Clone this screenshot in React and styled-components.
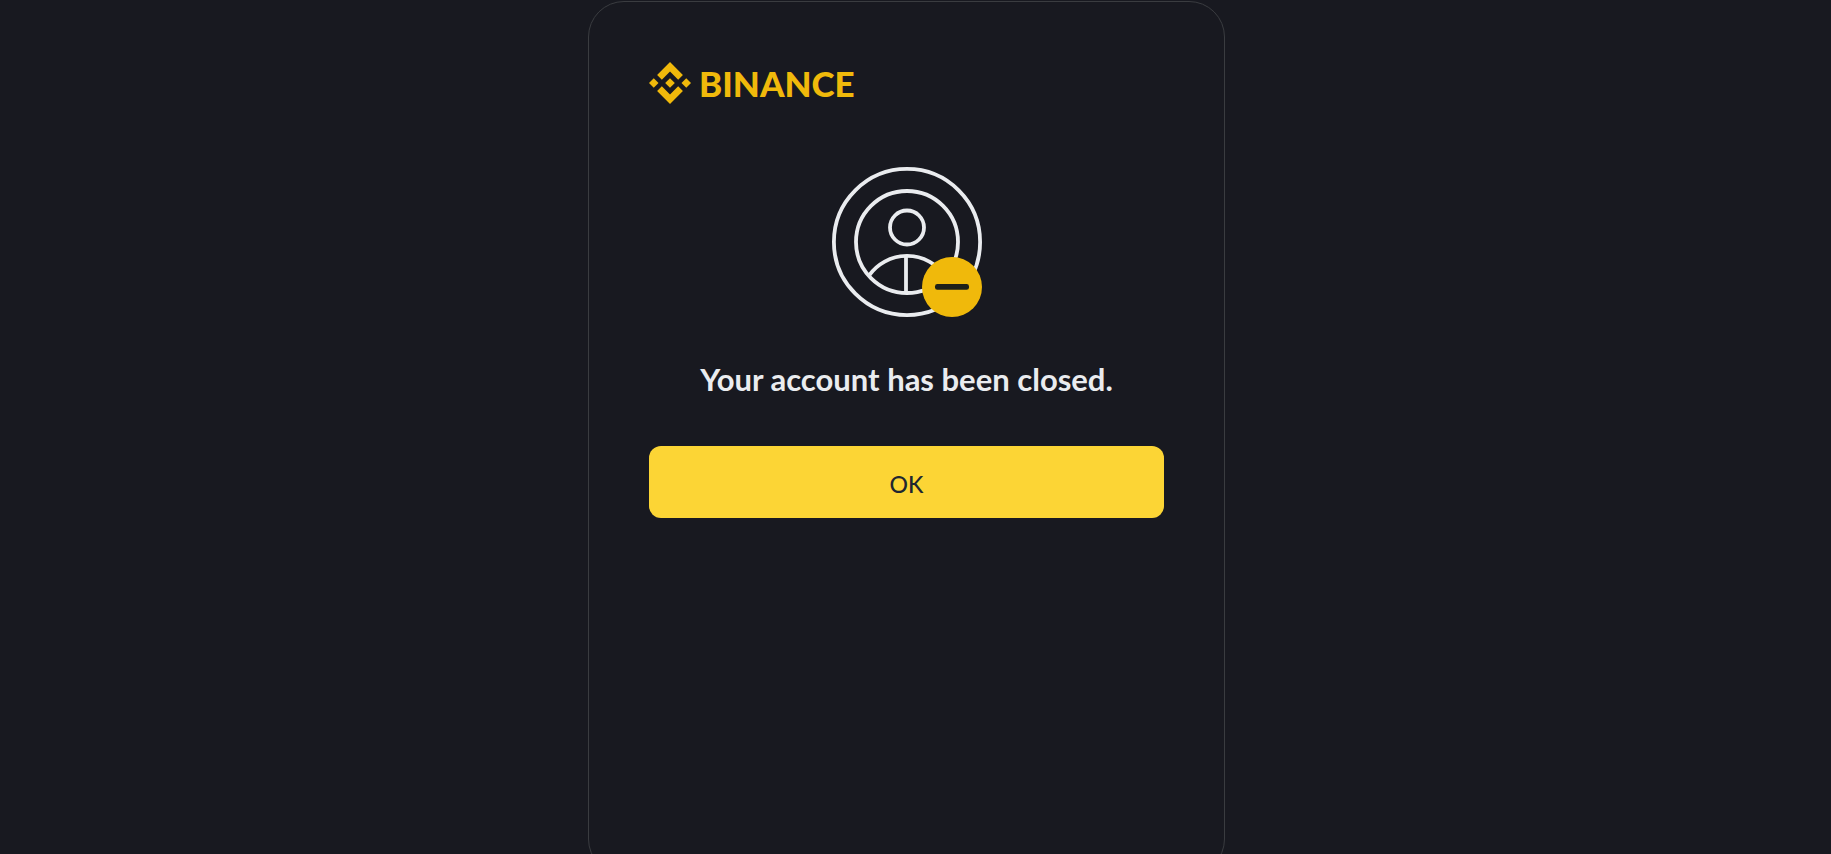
import React from 'react'
import styled, { createGlobalStyle } from 'styled-components'

const GlobalStyle = createGlobalStyle`
  * {
    box-sizing: border-box;
  }
  body {
    margin: 0;
    background: #181920;
    font-family: Lato, "Liberation Sans", sans-serif;
  }
`

const Page = styled.main`
  display: flex;
  justify-content: center;
  align-items: flex-start;
  height: 100vh;
  overflow: hidden;
  padding: 1px 18px 0 0;
`

const Card = styled.section`
  display: flex;
  flex-direction: column;
  flex-shrink: 0;
  width: 100%;
  max-width: 637px;
  min-height: calc(100vh + 20px);
  padding: 60px;
  border: 1px solid #3a3c40;
  border-radius: 36px;
`

const Brand = styled.a`
  display: flex;
  align-items: center;
  align-self: flex-start;
  gap: 8px;
  height: 42px;
  color: #f0b90b;
  text-decoration: none;
`

const BrandMark = styled.svg`
  width: 42px;
  height: 42px;
  fill: currentColor;
`

const BrandName = styled.span`
  font-size: 35px;
  font-weight: 900;
  line-height: 40px;
`

const Illustration = styled.svg`
  align-self: center;
  width: 150px;
  height: 150px;
  margin-top: 63px;
`

const Title = styled.h1`
  margin: 40px 0 45px;
  color: #eaecef;
  font-size: 31px;
  font-weight: 700;
  line-height: 44px;
  text-align: center;
`

const ConfirmButton = styled.button`
  height: 72px;
  padding: 4px 0 0;
  border: none;
  border-radius: 12px;
  background: #fcd535;
  color: #202630;
  font-family: inherit;
  font-size: 23px;
  font-weight: 500;
  cursor: pointer;

  &:hover {
    opacity: 0.9;
  }
`

function Logo() {
  return (
    <Brand href="#">
      <BrandMark viewBox="0 0 126.61 126.61" aria-hidden="true">
        <path d="M38.73 53.2 63.32 28.62 87.92 53.22 102.22 38.91 63.32 0 24.42 38.9z" />
        <path d="M0 63.31 14.3 49 28.61 63.31 14.3 77.61z" />
        <path d="M38.73 73.41 63.32 98 87.92 73.4 102.23 87.69 63.33 126.6 24.42 87.72z" />
        <path d="M98 63.31 112.3 49 126.61 63.3 112.3 77.62z" />
        <path d="M77.83 63.3 63.32 48.78 48.81 63.28 63.32 77.78z" />
      </BrandMark>
      <BrandName>BINANCE</BrandName>
    </Brand>
  )
}

function AccountClosedIcon() {
  return (
    <Illustration viewBox="0 0 150 150" fill="none" aria-hidden="true">
      <g stroke="#eaecef" strokeWidth="3.8">
        <circle cx="75" cy="75" r="73.1" />
        <circle cx="75" cy="75" r="51" />
        <circle cx="75" cy="60.5" r="17" />
        <path d="M37.3 108.2A46.5 46.5 0 0 1 112.7 108.2" />
        <path d="M74 89V126" />
      </g>
      {/* minus badge */}
      <circle cx="120" cy="120" r="30" fill="#f0b90b" />
      <rect x="103" y="117" width="34" height="5.8" rx="2.4" fill="#1e2019" />
    </Illustration>
  )
}

export default function App() {
  return (
    <>
      <GlobalStyle />
      <Page>
        <Card>
          <Logo />
          <AccountClosedIcon />
          <Title>Your account has been closed.</Title>
          <ConfirmButton type="button">OK</ConfirmButton>
        </Card>
      </Page>
    </>
  )
}
